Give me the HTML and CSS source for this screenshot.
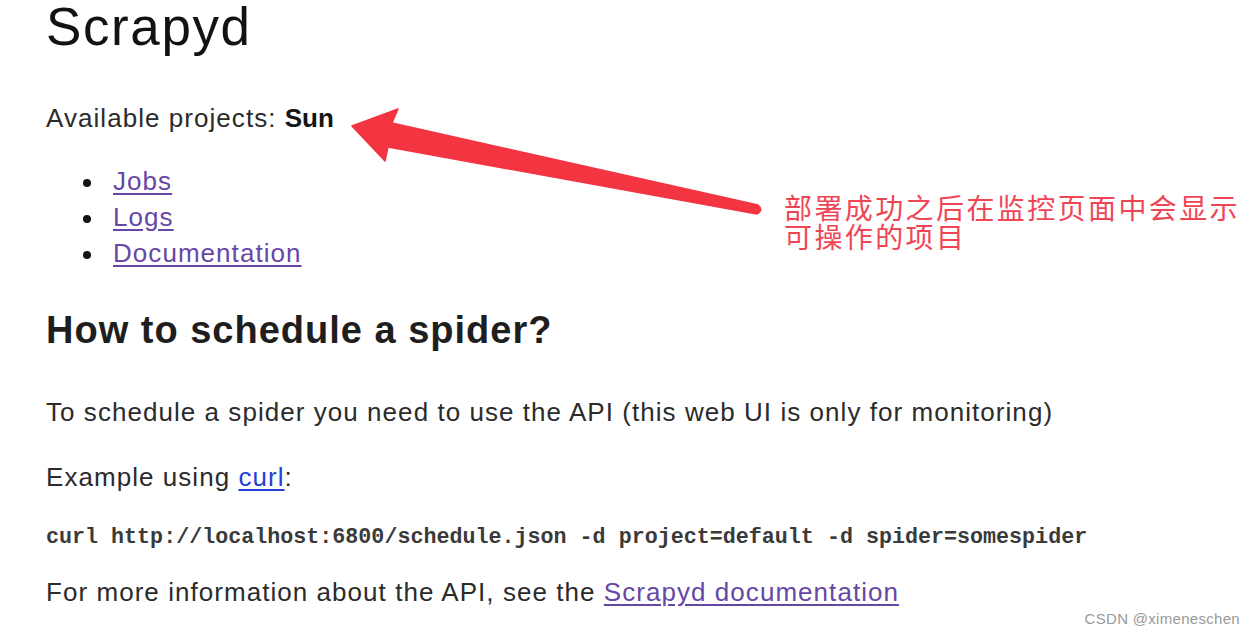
FILE: index.html
```html
<!DOCTYPE html>
<html lang="en">
<head>
<meta charset="utf-8">
<title>Scrapyd</title>
<link rel="stylesheet" href="styles.css">
</head>
<body>
<main class="page">
  <h1 class="title">Scrapyd</h1>
  <p class="text intro">Available projects: <b class="project">Sun</b></p>
  <ul class="nav">
    <li class="nav-item"><a class="visited" href="#">Jobs</a></li>
    <li class="nav-item"><a class="visited" href="#">Logs</a></li>
    <li class="nav-item"><a class="visited" href="#">Documentation</a></li>
  </ul>
  <h2 class="subtitle">How to schedule a spider?</h2>
  <p class="text lead">To schedule a spider you need to use the API (this web UI is only for monitoring)</p>
  <p class="text example">Example using <a class="link" href="#">curl</a>:</p>
  <pre class="code">curl http://localhost:6800/schedule.json -d project=default -d spider=somespider</pre>
  <p class="text more">For more information about the API, see the <a class="visited" href="#">Scrapyd documentation</a></p>
</main>
<svg class="arrow" viewBox="0 0 1253 635" width="1253" height="635" aria-hidden="true">
  <path d="M352 126 L398 109 L392 123 L758 205 Q764 210 757 214 L388 147 L385 161 Z" fill="#f33441" stroke="#f33441" stroke-width="1.5" stroke-linejoin="round"/>
</svg>
<div class="note">
  <div class="note-line">部署成功之后在监控页面中会显示</div>
  <div class="note-line">可操作的项目</div>
</div>
<div class="watermark">CSDN @ximeneschen</div>
</body>
</html>
```

FILE: styles.css
```css
html, body {
  margin: 0;
  padding: 0;
  background: #ffffff;
}

body {
  position: relative;
  width: 1253px;
  height: 635px;
  overflow: hidden;
  font-family: "Liberation Sans", Arial, Helvetica, sans-serif;
  color: #2b2b2b;
}

.page {
  padding: 0 0 0 46px;
}

.title {
  margin: 0;
  font-size: 53px;
  line-height: 53px;
  font-weight: 400;
  letter-spacing: 1.6px;
  color: #121212;
}

.text {
  margin: 0;
  font-size: 26px;
  line-height: 36px;
  letter-spacing: 1.05px;
}

.intro {
  margin-top: 47px;
}

.lead {
  margin-top: 42px;
}

.example {
  margin-top: 29px;
}

.more {
  margin-top: 21px;
}

.project {
  font-weight: 700;
  color: #151515;
  letter-spacing: 0;
}

.nav {
  list-style: none;
  margin: 27px 0 0;
  padding: 0 0 0 37px;
  font-size: 26px;
  line-height: 36px;
  letter-spacing: 1.05px;
}

.nav-item::before {
  content: "";
  display: inline-block;
  width: 8px;
  height: 8px;
  border-radius: 50%;
  background: #151515;
  margin-right: 22px;
  vertical-align: middle;
}

.visited {
  color: #6647a6;
  text-decoration: underline;
  text-underline-offset: 3px;
}

.link {
  color: #2440d8;
  text-decoration: underline;
  text-underline-offset: 3px;
}

.subtitle {
  margin: 37px 0 0;
  font-size: 38px;
  line-height: 44px;
  font-weight: 700;
  letter-spacing: 1px;
  color: #1e1e1e;
}

.code {
  margin: 28px 0 0;
  font-family: "Liberation Mono", "Courier New", monospace;
  font-size: 21.7px;
  line-height: 30px;
  font-weight: 700;
  color: #3a3a3a;
}

.arrow {
  position: absolute;
  top: 0;
  left: 0;
  pointer-events: none;
}

.note {
  position: absolute;
  left: 784px;
  top: 193px;
  font-family: "Noto Sans CJK SC", "Noto Sans", sans-serif;
  font-size: 28px;
  letter-spacing: 2.4px;
  color: #ef4656;
}

.note-line {
  height: 29px;
  line-height: 29px;
  white-space: nowrap;
}

.watermark {
  position: absolute;
  right: 13px;
  bottom: 8px;
  font-family: "Liberation Sans", Arial, sans-serif;
  font-size: 15px;
  letter-spacing: 0.3px;
  color: #9a9a9a;
}
```
